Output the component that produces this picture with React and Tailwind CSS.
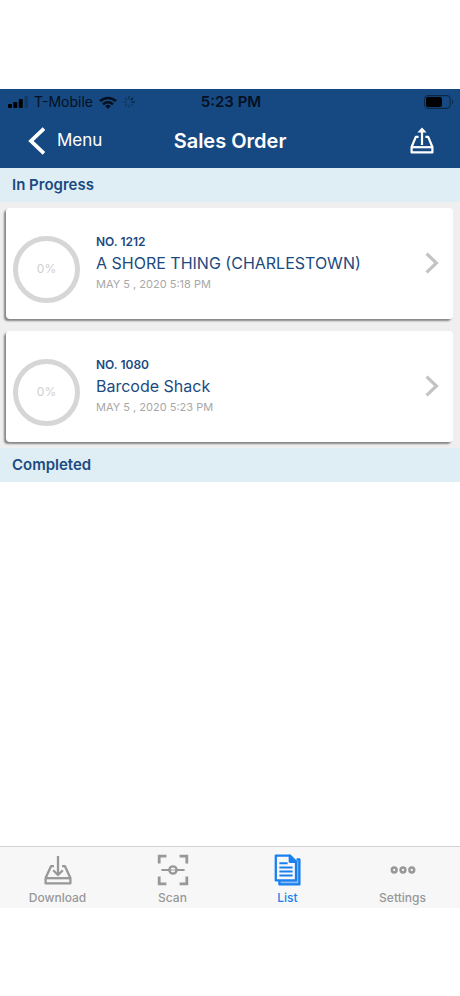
import React from "react";

const orders = [
  { no: "NO. 1212", name: "A SHORE THING (CHARLESTOWN)", date: "MAY 5 , 2020 5:18 PM" },
  { no: "NO. 1080", name: "Barcode Shack", date: "MAY 5 , 2020 5:23 PM" },
];

function SignalIcon() {
  return (
    <svg width="20" height="12" viewBox="0 0 20 12" aria-hidden="true">
      <rect x="0" y="8" width="4" height="4" rx="1" />
      <rect x="5.3" y="6" width="4" height="6" rx="1" />
      <rect x="10.8" y="3" width="4" height="9" rx="1" />
      <rect x="16.4" y="0" width="3.6" height="12" rx="1" opacity="0.2" />
    </svg>
  );
}

function WifiIcon() {
  return (
    <svg width="18" height="13" viewBox="0 0 18 13" fill="none" stroke="currentColor" strokeWidth="2.5" aria-hidden="true">
      <path d="M1 5.2A11.4 11.4 0 0 1 17 5.2" />
      <path d="M4 8.4A7 7 0 0 1 14 8.4" />
      <path d="M9 13L6.3 10.2A3.8 3.8 0 0 1 11.7 10.2Z" fill="currentColor" stroke="none" />
    </svg>
  );
}

function SpinnerIcon() {
  return (
    <svg width="12" height="12" viewBox="0 0 12 12" fill="none" stroke="currentColor" strokeWidth="1.1" strokeLinecap="round" aria-hidden="true">
      <path d="M6 .6V3" opacity="0.5" />
      <path d="M9.8 2.2L8.1 3.9" opacity="0.95" />
      <path d="M11.4 6H9" opacity="0.85" />
      <path d="M9.8 9.8L8.1 8.1" opacity="0.3" />
      <path d="M6 11.4V9" opacity="0.3" />
      <path d="M2.2 9.8L3.9 8.1" opacity="0.35" />
      <path d="M.6 6H3" opacity="0.4" />
      <path d="M2.2 2.2L3.9 3.9" opacity="0.45" />
    </svg>
  );
}

function BatteryIcon() {
  return (
    <svg width="30" height="14" viewBox="0 0 30 14" aria-hidden="true">
      <rect x="0.6" y="0.6" width="25.6" height="12.8" rx="3.6" fill="none" stroke="#000" strokeOpacity="0.45" strokeWidth="1.1" />
      <rect x="2" y="2" width="16" height="10" rx="2" />
      <path d="M28 4.6C29.6 5.3 29.6 8.7 28 9.4Z" opacity="0.45" />
    </svg>
  );
}

function UploadIcon() {
  return (
    <svg width="24" height="27" viewBox="0 0 24 27" fill="none" stroke="currentColor" strokeWidth="2.2" strokeLinejoin="round" aria-hidden="true">
      <path d="M8.6 9.8H5.8L1.6 20V25.4H22.4V20L18.2 9.8H15.4" />
      <path d="M1.6 20.2H22.4" />
      <path d="M12 18V3" />
      <path d="M12 .4L7.4 5.4H16.6Z" fill="currentColor" stroke="none" />
    </svg>
  );
}

function DownloadIcon() {
  return (
    <svg width="28" height="30" viewBox="0 0 28 30" fill="none" stroke="currentColor" strokeWidth="2.3" strokeLinejoin="round" aria-hidden="true">
      <path d="M10 11.2H7L1.6 23V28.4H26.4V23L21 11.2H18" />
      <path d="M1.6 23.2H26.4" />
      <path d="M14 1V19.4" />
      <path d="M9.2 15.2L14 20L18.8 15.2" />
    </svg>
  );
}

function ScanIcon() {
  return (
    <svg width="32" height="32" viewBox="0 0 32 32" fill="none" stroke="currentColor" strokeWidth="2.8" aria-hidden="true">
      <path d="M2.2 9.4V2.2H9.4M22.6 2.2H29.8V9.4M29.8 22.6V29.8H22.6M9.4 29.8H2.2V22.6" />
      <path d="M4.4 16H12M20 16H27.6" strokeWidth="2.2" />
      <circle cx="16" cy="16" r="3.6" strokeWidth="2.4" />
      <path d="M13 16H19" strokeWidth="1.6" opacity="0.6" />
    </svg>
  );
}

function ListIcon() {
  return (
    <svg width="28" height="32" viewBox="0 0 28 32" fill="none" stroke="currentColor" strokeWidth="2.3" strokeLinejoin="round" aria-hidden="true">
      <path d="M22.6 5.4H25.4V30.4H5.4V27" fill="currentColor" fillOpacity="0.5" />
      <path d="M1.8 1.6H15.8L22 7.8V26.4H1.8Z" fill="#f7f7f7" />
      <path d="M15.8 1.6V7.8H22Z" fill="currentColor" />
      <path d="M5.4 9.2H13.6M5.4 13.4H18.6M5.4 17.4H18.6M5.4 21.4H18.6" strokeWidth="2" />
    </svg>
  );
}

function SettingsIcon() {
  return (
    <svg width="26" height="8" viewBox="0 0 26 8" fill="none" stroke="currentColor" strokeWidth="2.5" aria-hidden="true">
      <circle cx="4.2" cy="4" r="2.4" />
      <circle cx="13" cy="4" r="2.4" />
      <circle cx="21.8" cy="4" r="2.4" />
    </svg>
  );
}

function OrderCard({ order }) {
  return (
    <li>
      <button
        type="button"
        className="flex h-[111px] w-full items-center gap-4 rounded-[4px] bg-white pr-[14px] pb-px pl-[7px] text-left shadow-[-2px_2px_2px_#858585]"
      >
        <span className="mt-3 flex size-[67px] shrink-0 items-center justify-center rounded-full border-[5px] border-[#d6d6d6] text-xs text-[#cfcfcf]">
          0%
        </span>
        <span className="flex min-w-0 flex-1 flex-col text-[#1b4a80]">
          <span className="text-xs leading-5 font-semibold">{order.no}</span>
          <span className="text-base leading-[22px]">{order.name}</span>
          <span className="text-[11px] leading-5 text-[#a8a8a8]">{order.date}</span>
        </span>
        <svg width="14" height="22" viewBox="0 0 14 22" fill="none" stroke="#c3c3c3" strokeWidth="3.2" aria-hidden="true">
          <path d="M1.6 1.6L11.4 11L1.6 20.4" />
        </svg>
      </button>
    </li>
  );
}

function SectionTitle({ children }) {
  return <h2 className="bg-[#dfeef5] px-3 py-2 text-[15px] leading-[18px] font-semibold text-[#1b4a80]">{children}</h2>;
}

const tabs = [
  { label: "Download", Icon: DownloadIcon },
  { label: "Scan", Icon: ScanIcon },
  { label: "List", Icon: ListIcon, active: true },
  { label: "Settings", Icon: SettingsIcon },
];

export default function App() {
  return (
    <div className="flex min-h-screen flex-col bg-white pt-[89px] pb-[88px] font-['Inter','Liberation_Sans',sans-serif]">
      <header className="bg-[#164982]">
        <div className="grid h-[26px] grid-cols-[1fr_auto_1fr] items-center pr-[6px] pl-2 text-[15px] leading-5 text-[#04101f]">
          <div className="flex items-center gap-[6px]">
            <SignalIcon />
            <span className="text-sm">T-Mobile</span>
            <WifiIcon />
            <SpinnerIcon />
          </div>
          <span className="font-semibold">5:23 PM</span>
          <div className="flex justify-end">
            <BatteryIcon />
          </div>
        </div>
        <div className="grid h-[53px] grid-cols-[1fr_auto_1fr] items-center pr-[26px] pb-[2px] pl-[26px] text-white">
          <button type="button" className="flex items-center gap-3 justify-self-start text-[17px]">
            <svg width="19" height="28" viewBox="0 0 19 28" fill="none" stroke="currentColor" strokeWidth="3.8" aria-hidden="true">
              <path d="M18 1.6L5 14L18 26.4" />
            </svg>
            Menu
          </button>
          <h1 className="text-xl font-semibold">Sales Order</h1>
          <button type="button" aria-label="Upload" className="justify-self-end">
            <UploadIcon />
          </button>
        </div>
      </header>

      <main className="flex-1">
        <SectionTitle>In Progress</SectionTitle>
        <ul className="flex flex-col gap-3 bg-[#efefef] pt-[6px] pr-[7px] pb-[6px] pl-[6px]">
          {orders.map((order) => (
            <OrderCard key={order.no} order={order} />
          ))}
        </ul>
        <SectionTitle>Completed</SectionTitle>
      </main>

      <nav className="grid grid-cols-4 border-t border-[#d2d2d2] bg-[#f7f7f7]">
        {tabs.map(({ label, Icon, active }) => (
          <a
            key={label}
            href="#"
            aria-current={active ? "page" : undefined}
            className={
              active
                ? "flex flex-col items-center pt-[7px] pb-[2px] text-xs font-medium text-[#1a80f0]"
                : "flex flex-col items-center pt-[7px] pb-[2px] text-xs font-medium text-[#989898]"
            }
          >
            <span className="flex h-8 items-center">
              <Icon />
            </span>
            <span className="pt-1 leading-4">{label}</span>
          </a>
        ))}
      </nav>
    </div>
  );
}
